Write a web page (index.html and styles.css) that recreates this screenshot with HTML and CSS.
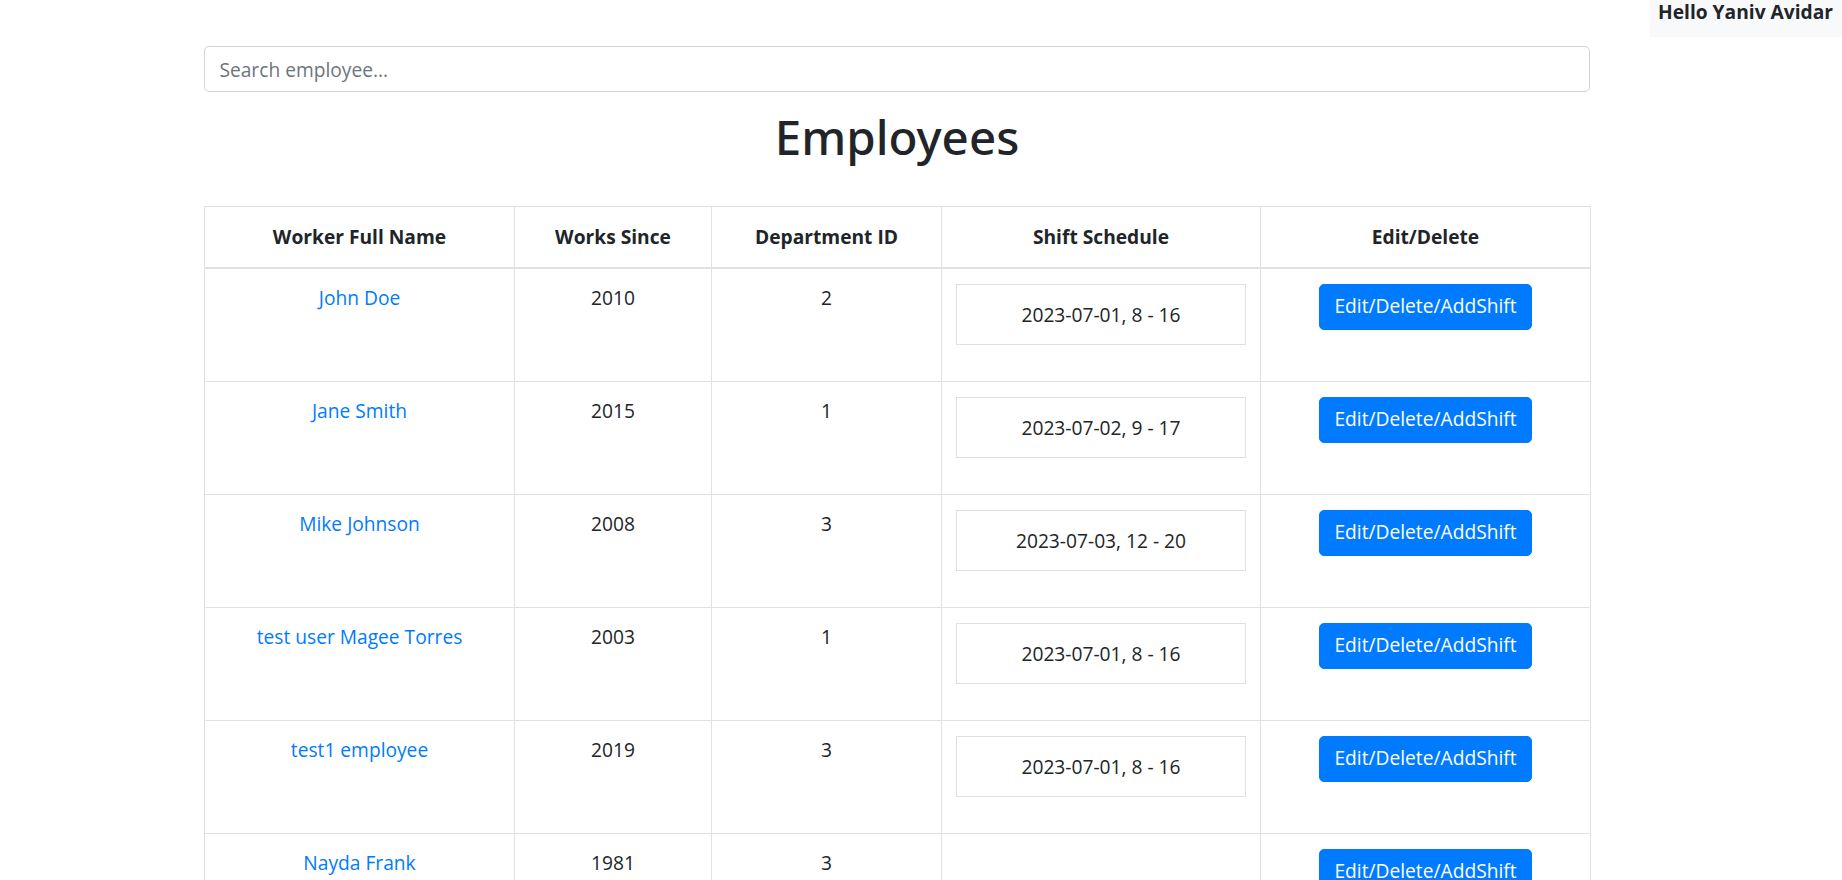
FILE: index.html
```html
<!DOCTYPE html>
<html lang="en">
<head>
<meta charset="utf-8">
<title>Employees</title>
<link rel="stylesheet" href="styles.css">
</head>
<body>
<div class="topbar">
  <div class="greeting">Hello Yaniv Avidar</div>
</div>
<div class="page">
  <main class="container">
    <input class="search" type="text" placeholder="Search employee...">
    <h1 class="title">Employees</h1>
    <table class="emp-table">
      <colgroup>
        <col class="c1"><col class="c2"><col class="c3"><col class="c4"><col class="c5">
      </colgroup>
      <thead>
        <tr>
          <th>Worker Full Name</th>
          <th>Works Since</th>
          <th>Department ID</th>
          <th>Shift Schedule</th>
          <th>Edit/Delete</th>
        </tr>
      </thead>
      <tbody>
        <tr>
          <td><a class="name" href="#">John Doe</a></td>
          <td>2010</td>
          <td>2</td>
          <td><ul class="shifts"><li class="shift">2023-07-01, 8 - 16</li></ul></td>
          <td><button class="btn">Edit/Delete/AddShift</button></td>
        </tr>
        <tr>
          <td><a class="name" href="#">Jane Smith</a></td>
          <td>2015</td>
          <td>1</td>
          <td><ul class="shifts"><li class="shift">2023-07-02, 9 - 17</li></ul></td>
          <td><button class="btn">Edit/Delete/AddShift</button></td>
        </tr>
        <tr>
          <td><a class="name" href="#">Mike Johnson</a></td>
          <td>2008</td>
          <td>3</td>
          <td><ul class="shifts"><li class="shift">2023-07-03, 12 - 20</li></ul></td>
          <td><button class="btn">Edit/Delete/AddShift</button></td>
        </tr>
        <tr>
          <td><a class="name" href="#">test user Magee Torres</a></td>
          <td>2003</td>
          <td>1</td>
          <td><ul class="shifts"><li class="shift">2023-07-01, 8 - 16</li></ul></td>
          <td><button class="btn">Edit/Delete/AddShift</button></td>
        </tr>
        <tr>
          <td><a class="name" href="#">test1 employee</a></td>
          <td>2019</td>
          <td>3</td>
          <td><ul class="shifts"><li class="shift">2023-07-01, 8 - 16</li></ul></td>
          <td><button class="btn">Edit/Delete/AddShift</button></td>
        </tr>
        <tr>
          <td><a class="name" href="#">Nayda Frank</a></td>
          <td>1981</td>
          <td>3</td>
          <td><ul class="shifts empty"></ul></td>
          <td><button class="btn">Edit/Delete/AddShift</button></td>
        </tr>
      </tbody>
    </table>
  </main>
</div>
</body>
</html>
```
FILE: styles.css
```css
html, body {
  margin: 0;
  padding: 0;
}
body {
  font-family: "Open Sans", "Noto Sans", Arial, sans-serif;
  font-size: 19.2px;
  line-height: 1.5;
  color: #212529;
  background: #fff;
}
.topbar {
  display: flex;
  justify-content: flex-end;
  height: 37px;
}
.greeting {
  background: #f8f9fa;
  font-weight: 700;
  line-height: 24px;
  padding: 0 9px 0 8px;
  height: 37px;
  box-sizing: border-box;
}
.page {
  padding-right: 48px;
}
.container {
  max-width: 1386px;
  margin: 9px auto 0;
}
.search {
  display: block;
  width: 100%;
  box-sizing: border-box;
  height: 46px;
  padding: 0 14.4px;
  font-family: inherit;
  font-size: 19.2px;
  color: #495057;
  border: 1px solid #ced4da;
  border-radius: 5px;
  background: #fff;
  outline: none;
}
.search::placeholder {
  color: #6c757d;
}
.title {
  margin: 16px 0 40px;
  font-family: "Noto Sans", "Open Sans", Arial, sans-serif;
  font-size: 47.5px;
  line-height: 58px;
  font-weight: 500;
  text-align: center;
}
.emp-table {
  width: 100%;
  border-collapse: collapse;
  table-layout: fixed;
  border: 1px solid #dee2e6;
}
.c1 { width: 310px; }
.c2 { width: 197px; }
.c3 { width: 230px; }
.c4 { width: 319px; }
.c5 { width: 330px; }
.emp-table th,
.emp-table td {
  border: 1px solid #dee2e6;
  padding: 15px 14px 14px;
  text-align: center;
}
.emp-table th {
  font-weight: 700;
  vertical-align: bottom;
  border-bottom-width: 2px;
  padding-top: 16px;
  padding-bottom: 15px;
}
.emp-table td {
  vertical-align: top;
  height: 83px;
}
.name {
  color: #007bff;
  text-decoration: none;
}
.shifts {
  list-style: none;
  margin: 0 0 22px;
  padding: 0;
}
.shifts.empty {
  margin: 0;
}
.shift {
  border: 1px solid rgba(0, 0, 0, 0.125);
  padding: 15px 14px;
  line-height: 29px;
}
.btn {
  font-family: inherit;
  font-size: 19.2px;
  line-height: 28.8px;
  color: #fff;
  background: #007bff;
  border: 1px solid #007bff;
  border-radius: 5px;
  padding: 7.6px 14.4px;
  cursor: pointer;
}
```
